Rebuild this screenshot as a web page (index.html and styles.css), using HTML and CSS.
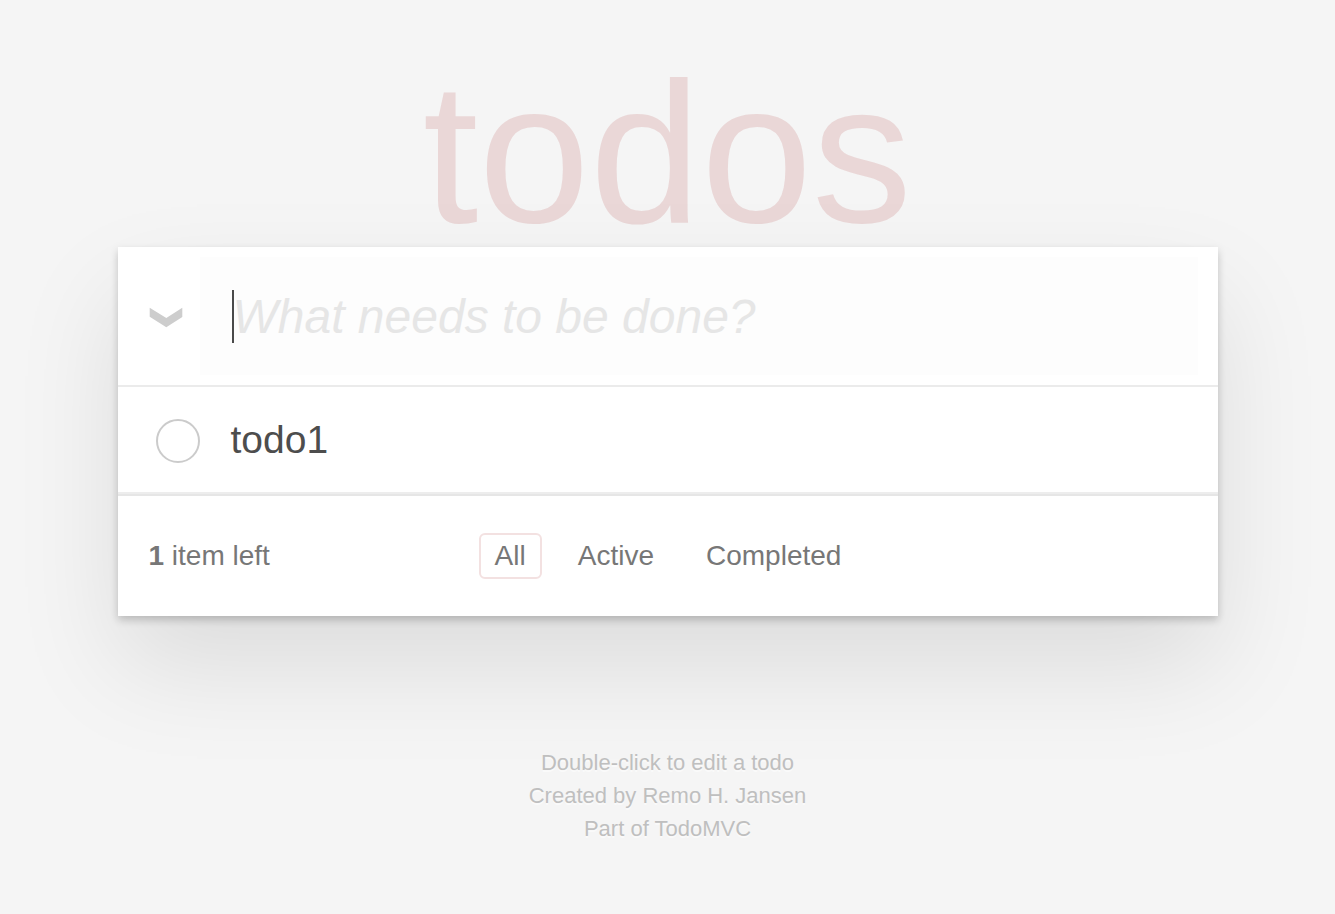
FILE: index.html
```html
<!DOCTYPE html>
<html lang="en">
<head>
<meta charset="utf-8">
<title>TodoMVC</title>
<link rel="stylesheet" href="styles.css">
</head>
<body>
<main class="page">
  <h1 class="title">todos</h1>
  <section class="todoapp">
    <header class="header">
      <label class="toggle-all">
        <svg width="34" height="21" viewBox="0 0 34 21"><polygon points="0.7,0.7 17.3,11 33.3,0.7 33.3,10 17.3,20.3 0.7,9.7" fill="#cdcdcd"/></svg>
      </label>
      <div class="new-todo-wrap">
        <input class="new-todo" placeholder="What needs to be done?">
        <span class="caret"></span>
      </div>
    </header>
    <ul class="todo-list">
      <li class="todo">
        <span class="check"><svg width="46" height="46" viewBox="0 0 46 46"><circle cx="23" cy="23" r="21" fill="none" stroke="#cbcbcb" stroke-width="2"/></svg></span>
        <label class="todo-label">todo1</label>
      </li>
    </ul>
    <footer class="footer">
      <span class="count"><strong>1</strong> item left</span>
      <ul class="filters">
        <li><a class="filter selected">All</a></li>
        <li><a class="filter">Active</a></li>
        <li><a class="filter">Completed</a></li>
      </ul>
      <span class="spacer"></span>
    </footer>
  </section>
  <footer class="info">
    <p class="info-line">Double-click to edit a todo</p>
    <p class="info-line">Created by <a class="info-link">Remo H. Jansen</a></p>
    <p class="info-line">Part of <a class="info-link">TodoMVC</a></p>
  </footer>
</main>
</body>
</html>
```

FILE: styles.css
```css
html, body {
  margin: 0;
  padding: 0;
}

body {
  background: #f5f5f5;
  color: #4d4d4d;
  font-family: "Liberation Sans", Arial, Helvetica, sans-serif;
  -webkit-font-smoothing: antialiased;
}

.page {
  max-width: 1100px;
  margin: 0 auto;
}

.title {
  margin: 0;
  padding-top: 58px;
  height: 189px;
  box-sizing: content-box;
  font-size: 200px;
  line-height: 189px;
  font-weight: 400;
  text-align: center;
  color: rgba(175, 47, 47, 0.15);
}

.todoapp {
  background: #fff;
  margin: 0 0 80px 0;
  box-shadow: 0 4px 8px 0 rgba(0, 0, 0, 0.2), 0 50px 100px 0 rgba(0, 0, 0, 0.1);
}

.header {
  display: flex;
  align-items: center;
  padding: 10px 20px 10px 0;
}

.toggle-all {
  width: 82px;
  box-sizing: border-box;
  padding-left: 31px;
  padding-top: 3px;
  display: flex;
}

.new-todo-wrap {
  position: relative;
  flex: 1;
}

.new-todo {
  display: block;
  width: 100%;
  box-sizing: border-box;
  height: 118px;
  margin: 0;
  padding: 0 32px 0 33px;
  border: none;
  outline: none;
  background: rgba(0, 0, 0, 0.006);
  font-family: inherit;
  font-size: 48px;
  color: #4d4d4d;
}

.new-todo::placeholder {
  font-style: italic;
  color: #e6e6e6;
}

.caret {
  position: absolute;
  left: 32px;
  top: 33px;
  width: 2px;
  height: 53px;
  background: #4a4a4a;
}

.todo-list {
  margin: 0;
  padding: 0;
  list-style: none;
  border-top: 2px solid #ebebeb;
}

.todo {
  display: flex;
  align-items: center;
  height: 105px;
  padding-left: 37px;
  border-bottom: 2px solid #ededed;
}

.check {
  display: flex;
  margin-top: 3px;
}

.todo-label {
  margin-left: 30px;
  font-size: 39px;
  line-height: 50px;
  color: #4d4d4d;
}

.footer {
  display: grid;
  grid-template-columns: 1fr auto 1fr;
  align-items: center;
  height: 120px;
  padding: 0 30px 0 31px;
  border-top: 2px solid #e6e6e6;
  color: #777;
  font-size: 28px;
  line-height: 30px;
}

.count strong {
  font-weight: 700;
}

.filters {
  display: flex;
  gap: 20px;
  margin: 0;
  padding: 0;
  list-style: none;
}

.filter {
  display: block;
  padding: 6px 14px;
  border: 2px solid transparent;
  border-radius: 6px;
  color: inherit;
  text-decoration: none;
}

.filter.selected {
  border-color: #f3e1e1;
}

.info {
  margin: 130px auto 0;
  color: #bfbfbf;
  font-size: 22px;
  line-height: 33px;
  text-align: center;
  text-shadow: 0 2px 0 rgba(255, 255, 255, 0.5);
}

.info-line {
  margin: 0;
}

.info-link {
  color: inherit;
  text-decoration: none;
}
```
